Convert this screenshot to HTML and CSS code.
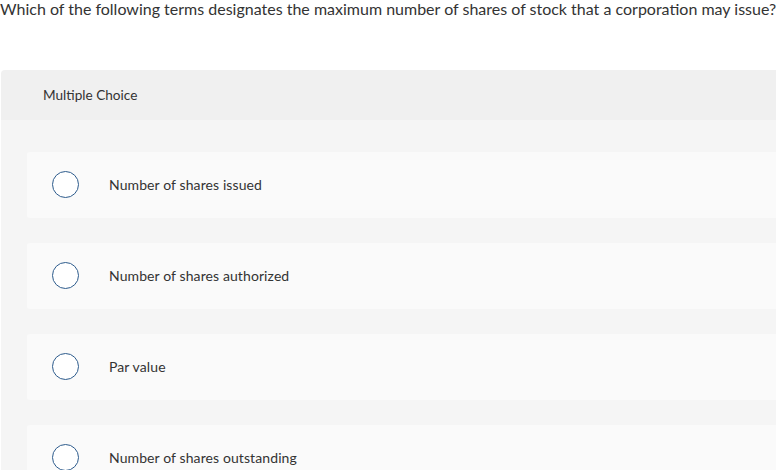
FILE: index.html
```html
<!DOCTYPE html>
<html>
<head>
<meta charset="utf-8">
<link rel="stylesheet" href="styles.css">
</head>
<body>
<p class="question">Which of the following terms designates the maximum number of shares of stock that a corporation may issue?</p>
<div class="panel">
  <div class="panel-head">Multiple Choice</div>
  <div class="panel-body">
    <div class="option"><span class="radio"></span><span class="label">Number of shares issued</span></div>
    <div class="option"><span class="radio"></span><span class="label">Number of shares authorized</span></div>
    <div class="option"><span class="radio"></span><span class="label">Par value</span></div>
    <div class="option"><span class="radio"></span><span class="label">Number of shares outstanding</span></div>
  </div>
</div>
</body>
</html>
```
FILE: styles.css
```css
html, body {
  margin: 0;
  padding: 0;
  background: #ffffff;
  overflow: hidden;
}
body {
  font-family: "Lato", "Open Sans", sans-serif;
  color: #333333;
}
.question {
  margin: 0;
  font-size: 16px;
  line-height: 17px;
  white-space: nowrap;
}
.panel {
  margin: 53px 0 0 1px;
  border-radius: 4px 0 0 0;
  overflow: hidden;
  height: 400px;
}
.panel-head {
  background: #f0f0f0;
  height: 50px;
  padding-left: 42px;
  display: flex;
  align-items: center;
  font-size: 13.6px;
}
.panel-body {
  background: #f5f5f5;
  padding: 32px 0 0 26px;
}
.option {
  box-sizing: border-box;
  height: 66px;
  background: #fafafa;
  border-radius: 3px 0 0 3px;
  margin-bottom: 25px;
  display: flex;
  align-items: center;
  padding-left: 25px;
  padding-bottom: 2px;
}
.radio {
  width: 25px;
  height: 25px;
  border: 1.5px solid #2d5b8c;
  border-radius: 50%;
  background: #ffffff;
  flex: none;
}
.label {
  margin-left: 30px;
  font-size: 14px;
  letter-spacing: 0.1px;
}
```
